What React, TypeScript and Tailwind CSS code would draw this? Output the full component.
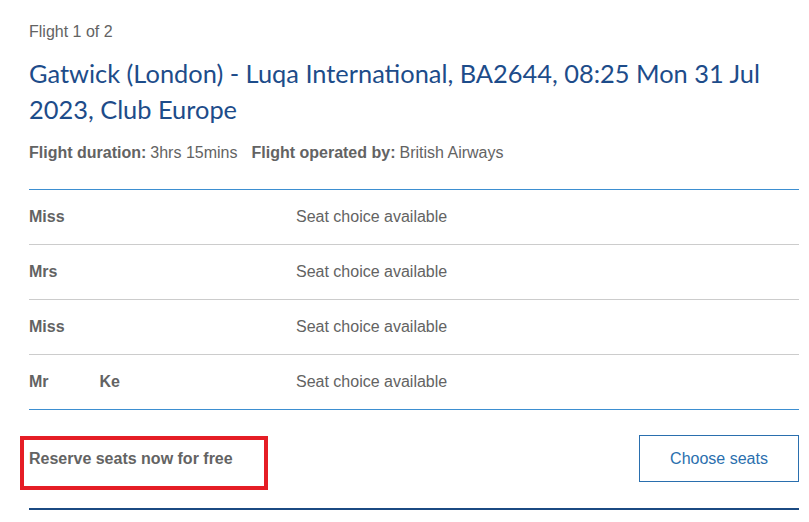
import React from "react";

const rows = [
  { title: "Miss", extra: "" },
  { title: "Mrs", extra: "" },
  { title: "Miss", extra: "" },
  { title: "Mr", extra: "Ke" },
];

export default function App() {
  return (
    <div className="w-[809px] h-[522px] bg-white overflow-hidden font-['Liberation_Sans',Arial,sans-serif] text-[16px] text-[#636363]">
      <div className="pl-[29px] pr-[10px] pt-[23px]">
        <div className="leading-[18px]">Flight 1 of 2</div>
        <h1 className="mt-[14px] font-['Lato',sans-serif] text-[25.4px] leading-[36px] text-[#1d4c8a] pr-[10px]">
          Gatwick (London) - Luqa International, BA2644, 08:25 Mon 31 Jul 2023, Club Europe
        </h1>
        <div className="mt-[17px] leading-[18px] flex">
          <span className="font-bold">Flight duration:</span>
          <span className="ml-[4px]">3hrs 15mins</span>
          <span className="font-bold ml-[14px]">Flight operated by:</span>
          <span className="ml-[4px]">British Airways</span>
        </div>
        <div className="mt-[27px] border-t border-[#3d8fd1]">
          {rows.map((r, i) => (
            <div
              key={i}
              className={`flex items-center h-[55px] ${i < rows.length - 1 ? "border-b border-[#cccccc]" : "border-b border-[#3d8fd1]"}`}
            >
              <div className="w-[267px] flex font-bold">
                <span>{r.title}</span>
                {r.extra && <span className="ml-[51px]">{r.extra}</span>}
              </div>
              <div>Seat choice available</div>
            </div>
          ))}
        </div>
        <div className="flex items-center justify-between pt-[25px] pb-[26px] border-b-2 border-[#1b4a82]">
          <div className="relative font-bold leading-[18px]">
            Reserve seats now for free
            <div className="absolute left-[-9px] top-[-14px] w-[248px] h-[54px] border-[4px] border-[#e51d25]" />
          </div>
          <button className="w-[160px] h-[47px] border border-[#2a6fae] text-[#2a6fae] bg-white text-[16px]">
            Choose seats
          </button>
        </div>
      </div>
    </div>
  );
}
